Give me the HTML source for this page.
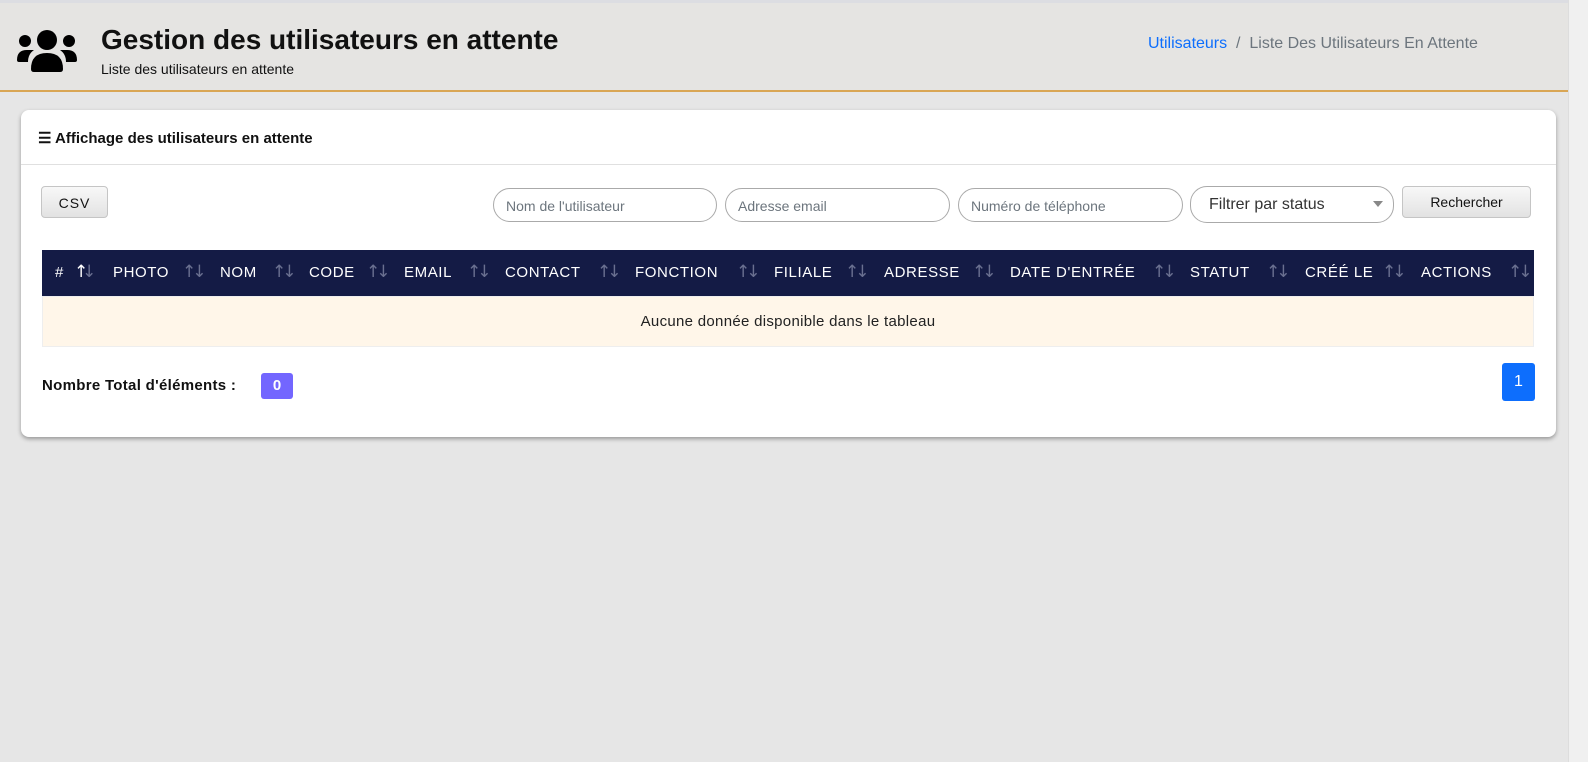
<!DOCTYPE html>
<html><head><meta charset="utf-8"><style>
*{box-sizing:border-box;margin:0;padding:0}
body{width:1588px;height:762px;overflow:hidden;background:#e6e6e6;font-family:"Liberation Sans",sans-serif;position:relative;color:#111}
.top{position:absolute;left:0;top:0;width:1588px;height:92px;background:#e5e4e2;border-top:3px solid #dcdde2;border-bottom:2px solid #d9a655}
.ab{position:absolute;white-space:nowrap}
.card{position:absolute;left:21px;top:110px;width:1535px;height:327px;background:#fff;border-radius:8px;box-shadow:0 2px 4px rgba(0,0,0,.35)}
.inp{position:absolute;top:188px;height:34px;border:1px solid #aaa;border-radius:17px;background:#fff;font-size:14px;color:#6c757d;padding:9px 0 0 12px}
.btn{position:absolute;background:linear-gradient(#f8f8f8,#e2e2e2);border:1px solid #c5c5c5;border-radius:4px;font-size:14px;text-align:center}
.th{position:absolute;left:42px;top:250px;width:1492px;height:46px;background:#141b45}
.th span{position:absolute;top:14px;color:#fff;font-size:15px;letter-spacing:.6px;white-space:nowrap}
.th i{position:absolute;top:12px;color:#6a7090;font-style:normal;font-size:17px;letter-spacing:-4px;font-family:"DejaVu Sans",sans-serif}
</style></head><body>
<div class="top"></div>
<svg class="ab" style="left:16px;top:29px" width="62" height="44" viewBox="0 0 62 44">
<circle cx="31" cy="11" r="10" fill="#000"/><circle cx="9" cy="12" r="6" fill="#000"/><circle cx="53" cy="12" r="6" fill="#000"/>
<path d="M15 40 Q15 24 31 24 Q47 24 47 40 Q47 43 44 43 L18 43 Q15 43 15 40 Z" fill="#000"/>
<path d="M1 31 Q1 21 11 21 L18 21 Q12 25 12 33 L3 33 Q1 33 1 31 Z" fill="#000"/>
<path d="M61 31 Q61 21 51 21 L44 21 Q50 25 50 33 L59 33 Q61 33 61 31 Z" fill="#000"/>
</svg>
<div class="ab" style="left:101px;top:24px;font-size:28px;font-weight:bold">Gestion des utilisateurs en attente</div>
<div class="ab" style="left:101px;top:61px;font-size:14px">Liste des utilisateurs en attente</div>
<div class="ab" style="left:1148px;top:35px;font-size:16px;color:#0d6efd">Utilisateurs <span style="color:#6c757d">&nbsp;/&nbsp; Liste Des Utilisateurs En Attente</span></div>
<div class="card"></div>
<div class="ab" style="left:21px;top:164px;width:1535px;height:1px;background:#e0e0e0"></div>
<div class="ab" style="left:38px;top:129px;font-size:15px;font-weight:bold">☰ Affichage des utilisateurs en attente</div>
<div class="btn" style="left:41px;top:186px;width:67px;height:32px;padding-top:8px;letter-spacing:1px">CSV</div>
<div class="inp" style="left:493px;width:224px">Nom de l'utilisateur</div>
<div class="inp" style="left:725px;width:225px">Adresse email</div>
<div class="inp" style="left:958px;width:225px">Numéro de téléphone</div>
<div class="inp" style="left:1190px;top:186px;height:37px;width:204px;font-size:16px;color:#333;padding-top:9px;padding-left:18px">Filtrer par status<span style="position:absolute;right:10px;top:14px;border:5px solid transparent;border-top:6px solid #888"></span></div>
<div class="btn" style="left:1402px;top:186px;width:129px;height:32px;padding-top:7px">Rechercher</div>
<div class="th">
<span style="left:13px">#</span><i style="left:32px;color:#fff">↑</i><i style="left:40px">↓</i>
<span style="left:71px">PHOTO</span><i style="left:140px">↑↓</i>
<span style="left:178px">NOM</span><i style="left:230px">↑↓</i>
<span style="left:267px">CODE</span><i style="left:324px">↑↓</i>
<span style="left:362px">EMAIL</span><i style="left:425px">↑↓</i>
<span style="left:463px">CONTACT</span><i style="left:555px">↑↓</i>
<span style="left:593px">FONCTION</span><i style="left:694px">↑↓</i>
<span style="left:732px">FILIALE</span><i style="left:803px">↑↓</i>
<span style="left:842px">ADRESSE</span><i style="left:930px">↑↓</i>
<span style="left:968px">DATE D'ENTRÉE</span><i style="left:1110px">↑↓</i>
<span style="left:1148px">STATUT</span><i style="left:1224px">↑↓</i>
<span style="left:1263px">CRÉÉ LE</span><i style="left:1340px">↑↓</i>
<span style="left:1379px">ACTIONS</span><i style="left:1466px">↑↓</i>
</div>
<div class="ab" style="left:42px;top:296px;width:1492px;height:51px;background:#fff6e9;border:1px solid #eee;text-align:center;padding-top:16px;font-size:15px;color:#222;letter-spacing:.3px">Aucune donnée disponible dans le tableau</div>
<div class="ab" style="left:42px;top:377px;font-size:15px;font-weight:bold;letter-spacing:.3px">Nombre Total d'éléments :</div>
<div class="ab" style="left:261px;top:373px;width:32px;height:26px;background:#7366ff;border-radius:3px;color:#fff;font-weight:bold;font-size:15px;text-align:center;padding-top:4px">0</div>
<div class="ab" style="left:1502px;top:363px;width:33px;height:38px;background:#0d6efd;border-radius:3px;color:#fff;font-size:16px;text-align:center;padding-top:10px">1</div>
<div class="ab" style="left:1568px;top:0;width:20px;height:762px;background:#f0f0f0;border-left:1px solid #ddd"></div>
</body></html>
